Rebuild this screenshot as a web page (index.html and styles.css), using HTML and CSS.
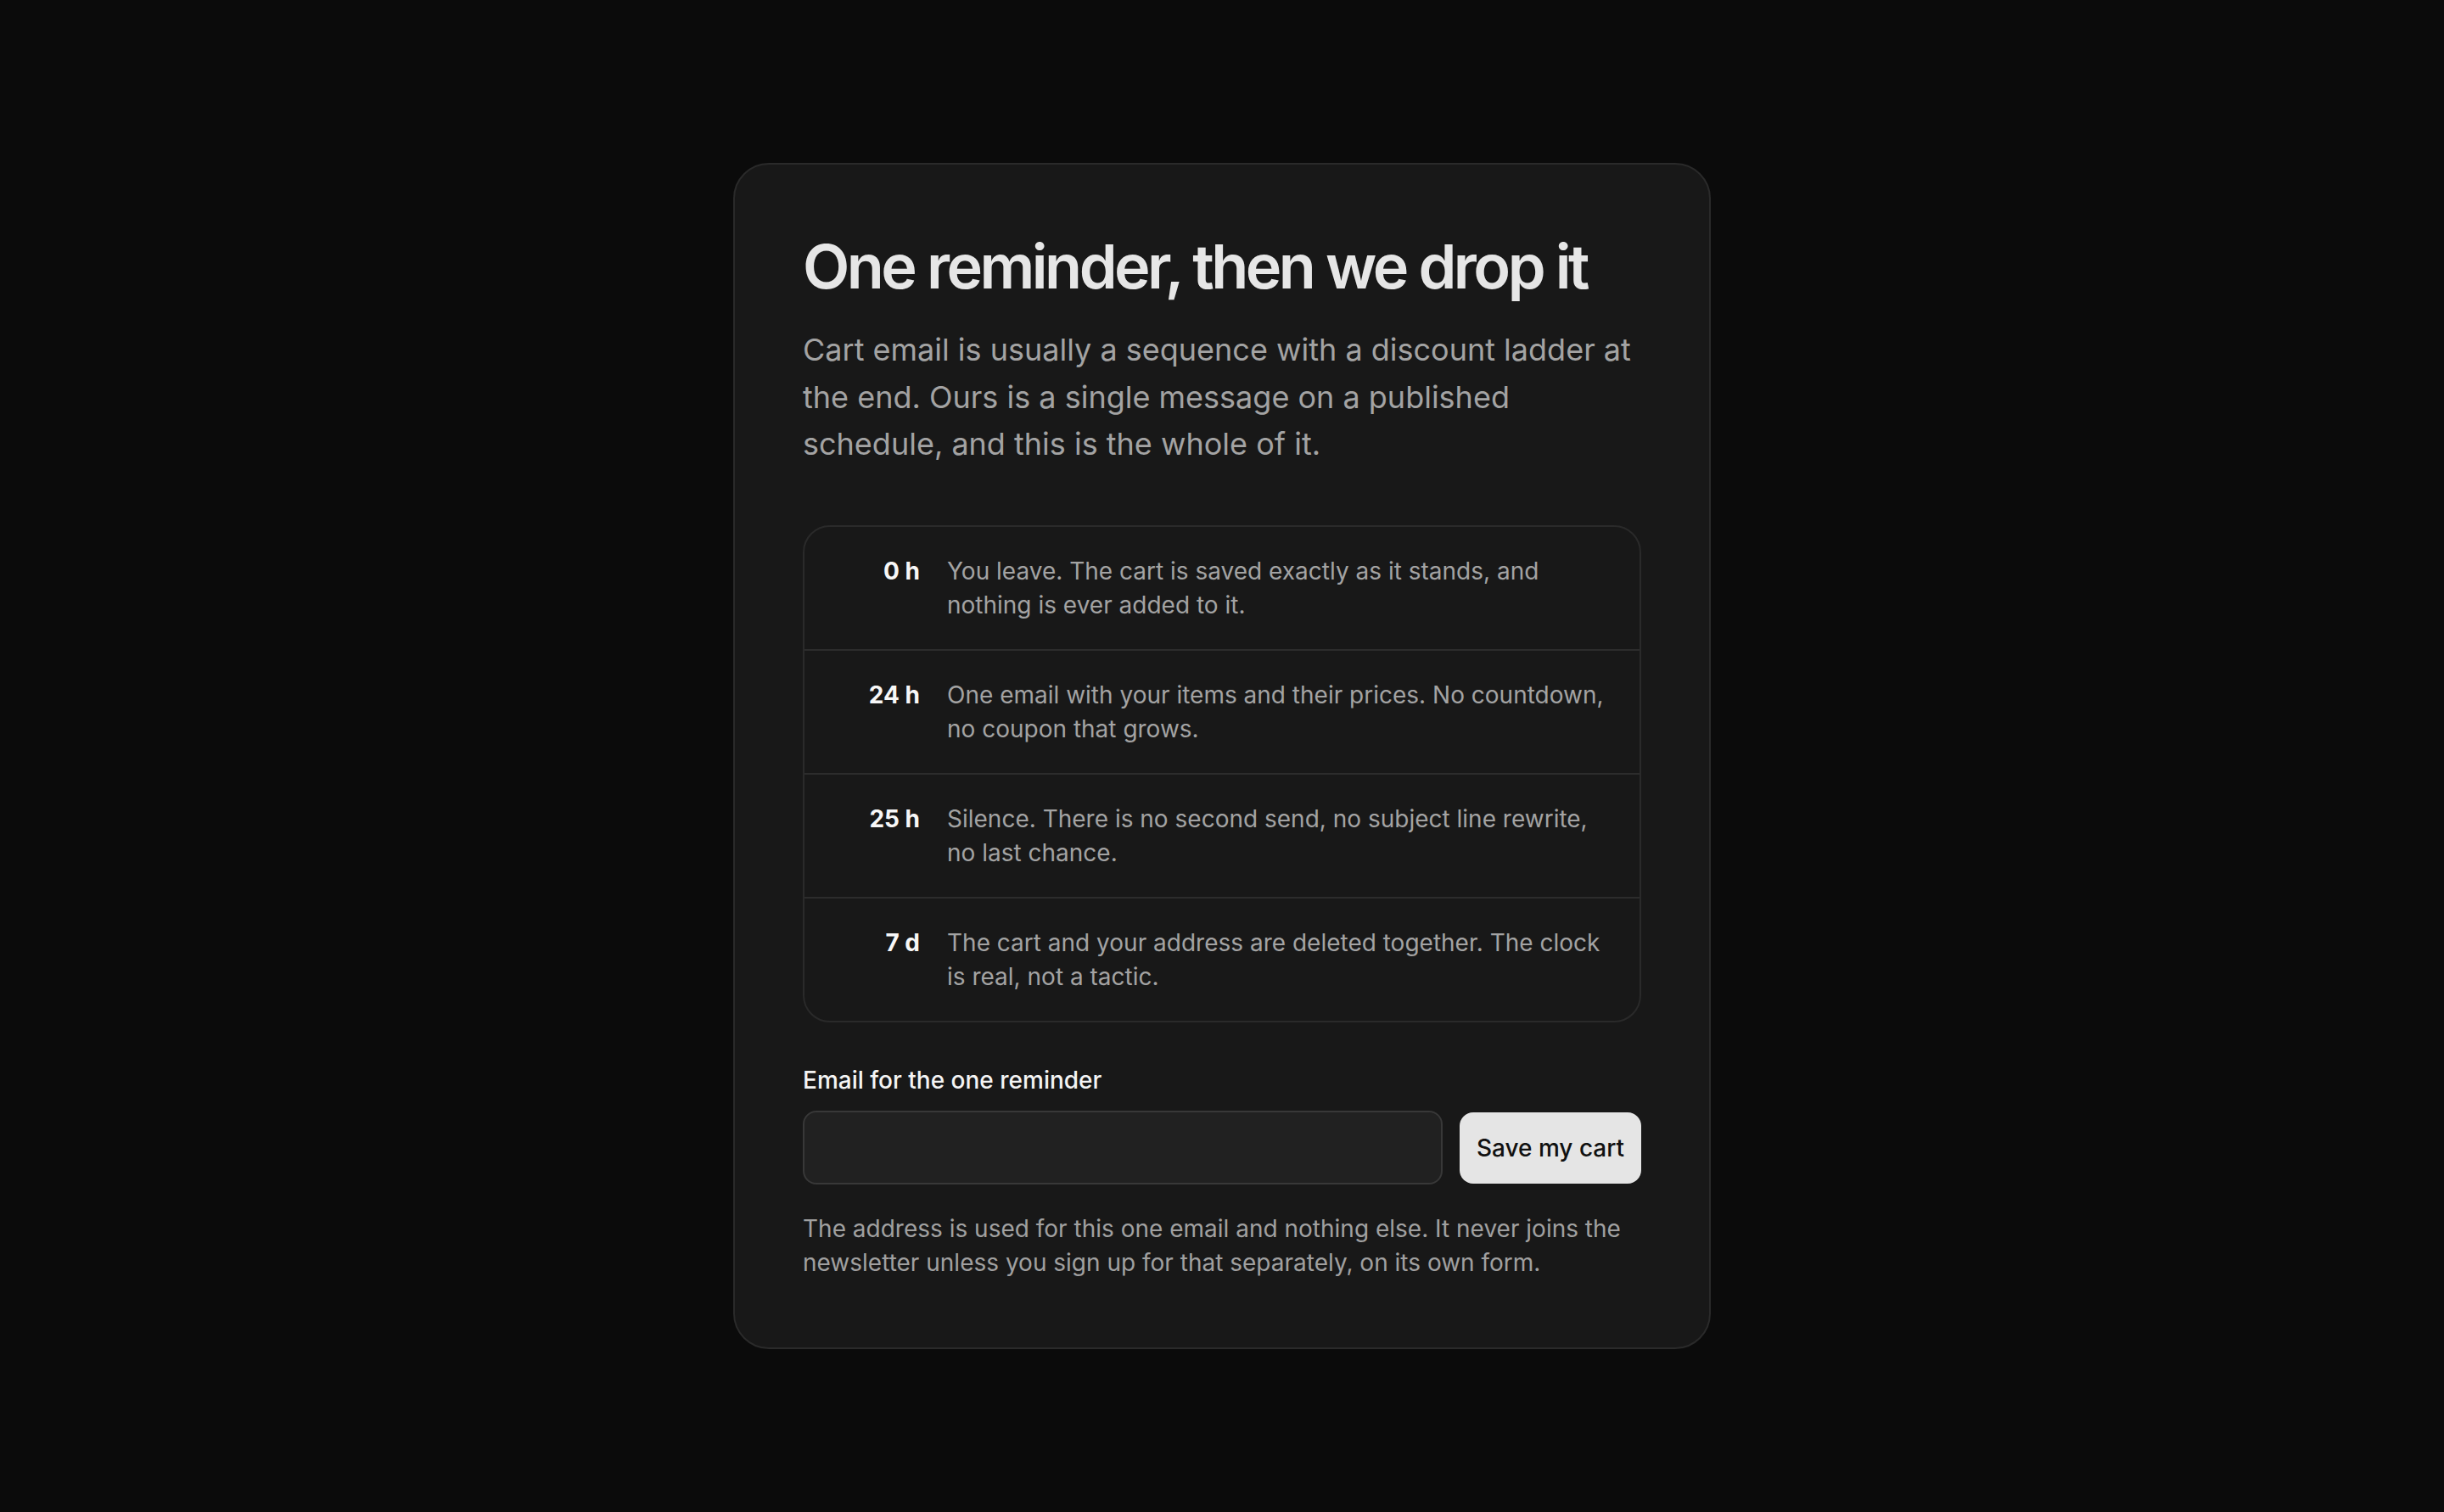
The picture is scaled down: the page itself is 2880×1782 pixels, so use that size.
FILE: index.html
```html
<!DOCTYPE html>
<html lang="en">
<head>
<meta charset="utf-8">
<title>One reminder, then we drop it</title>
<link rel="stylesheet" href="styles.css">
</head>
<body>
<main class="page">
  <section class="card">
    <h1 class="title">One reminder, then we drop it</h1>
    <p class="lede">Cart email is usually a sequence with a discount ladder at the end. Ours is a single message on a published schedule, and this is the whole of it.</p>

    <ol class="timeline">
      <li class="step">
        <span class="step-time">0 h</span>
        <span class="step-text">You leave. The cart is saved exactly as it stands, and nothing is ever added to it.</span>
      </li>
      <li class="step">
        <span class="step-time">24 h</span>
        <span class="step-text">One email with your items and their prices. No countdown, no coupon that grows.</span>
      </li>
      <li class="step">
        <span class="step-time">25 h</span>
        <span class="step-text">Silence. There is no second send, no subject line rewrite, no last chance.</span>
      </li>
      <li class="step">
        <span class="step-time">7 d</span>
        <span class="step-text">The cart and your address are deleted together. The clock is real, not a tactic.</span>
      </li>
    </ol>

    <form class="signup">
      <label class="signup-label" for="reminder-email">Email for the one reminder</label>
      <div class="signup-row">
        <input class="signup-input" id="reminder-email" type="email">
        <button class="signup-button" type="button">Save my cart</button>
      </div>
      <p class="signup-note">The address is used for this one email and nothing else. It never joins the newsletter unless you sign up for that separately, on its own form.</p>
    </form>
  </section>
</main>
</body>
</html>
```

FILE: styles.css
```css
* {
  box-sizing: border-box;
}

html, body {
  margin: 0;
  padding: 0;
  height: 100%;
}

body {
  background: #0b0b0b;
  font-family: Inter, "Noto Sans", "Liberation Sans", sans-serif;
  color: #e6e6e6;
}

.page {
  min-height: 100%;
  display: flex;
  align-items: center;
  justify-content: center;
}

.card {
  width: 1152px;
  background: #181818;
  border: 2px solid #2a2a2a;
  border-radius: 42px;
  padding: 80px;
}

.title {
  margin: 0;
  font-size: 72px;
  line-height: 1.1;
  font-weight: 600;
  letter-spacing: -0.049em;
  color: #e6e6e6;
}

.lede {
  margin: 32px 0 0;
  font-size: 36px;
  line-height: 1.55;
  color: #a3a3a3;
}

.timeline {
  list-style: none;
  margin: 67px 0 0;
  padding: 0;
  border: 2px solid #2a2a2a;
  border-radius: 32px;
}

.step {
  display: flex;
  gap: 32px;
  padding: 32px 40px;
  font-size: 28px;
  line-height: 40px;
}

.step + .step {
  border-top: 2px solid #2c2c2c;
}

.step-time {
  flex: 0 0 96px;
  text-align: right;
  font-weight: 700;
  color: #f7f7f7;
}

.step-text {
  flex: 1;
  color: #a3a3a3;
}

.signup {
  margin: 48px 0 0;
}

.signup-label {
  display: block;
  font-size: 28px;
  line-height: 40px;
  font-weight: 500;
  color: #f4f4f4;
}

.signup-row {
  display: flex;
  align-items: center;
  gap: 20px;
  margin-top: 16px;
}

.signup-input {
  flex: 1;
  height: 87px;
  padding: 0 24px;
  background: #212121;
  border: 2px solid #383838;
  border-radius: 16px;
  font: inherit;
  font-size: 28px;
  color: #e6e6e6;
  outline: none;
}

.signup-button {
  flex: 0 0 auto;
  width: 214px;
  height: 84px;
  padding: 0;
  background: #e5e5e5;
  border: none;
  border-radius: 16px;
  font-family: inherit;
  font-size: 28px;
  font-weight: 500;
  color: #111111;
}

.signup-note {
  margin: 32px 0 0;
  font-size: 28px;
  line-height: 40px;
  color: #a0a0a0;
}
```
